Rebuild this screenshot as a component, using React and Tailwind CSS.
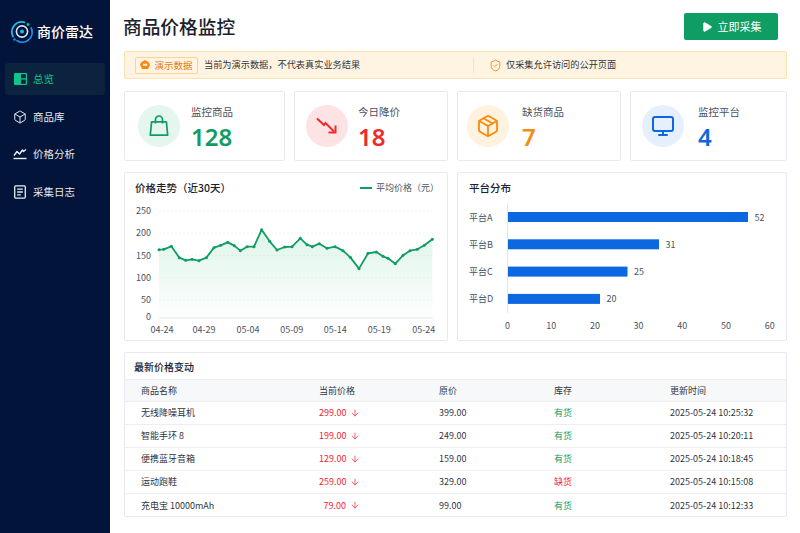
import { ArrowDown, Box, Monitor, Package, Play, ShieldCheck } from "lucide-react";

const font = "font-['Noto_Sans_CJK_SC','Noto_Sans',sans-serif]";

const linePoints = [
  [117, 239], [131, 238], [154, 229], [178, 263], [197, 271], [216, 268], [237, 272], [259, 263],
  [282, 233], [302, 226], [323, 217], [343, 227], [361, 242], [381, 230], [402, 230], [425, 179],
  [449, 214], [471, 240], [494, 231], [516, 230], [541, 205], [561, 224], [577, 230], [598, 221],
  [621, 235], [645, 230], [669, 242], [691, 262], [717, 296], [744, 250], [769, 246], [789, 259],
  [804, 265], [826, 281], [849, 256], [870, 242], [892, 238], [913, 226], [937, 208],
].map(([x, y]) => [x / 3 - 5, y / 3 - 3]);

const rows = [
  ["无线降噪耳机", "299.00", "399.00", "有货", "2025-05-24 10:25:32"],
  ["智能手环 8", "199.00", "249.00", "有货", "2025-05-24 10:20:11"],
  ["便携蓝牙音箱", "129.00", "159.00", "有货", "2025-05-24 10:18:45"],
  ["运动跑鞋", "259.00", "329.00", "缺货", "2025-05-24 10:15:08"],
  ["充电宝 10000mAh", "79.00", "99.00", "有货", "2025-05-24 10:12:33"],
];

function LogoIcon() {
  return (
    <svg width="24" height="24" viewBox="0 0 24 24" fill="none">
      <path d="M3 16.5A10 10 0 0 1 14.5 2.3" stroke="#22b8e8" strokeWidth="1.8" strokeLinecap="round" />
      <path d="M21.2 8A10 10 0 0 1 7 20.8" stroke="#1a8fe3" strokeWidth="1.8" strokeLinecap="round" />
      <circle cx="18" cy="4.5" r="1.4" fill="#16c784" />
      <circle cx="4.5" cy="19.5" r="1.3" fill="#1a8fe3" />
      <circle cx="12" cy="11.5" r="5.6" stroke="#d6e6f5" strokeWidth="1.6" />
      <circle cx="12" cy="11.5" r="2" fill="#22b8e8" />
    </svg>
  );
}

function OverviewIcon() {
  return (
    <svg width="13" height="12" viewBox="0 0 13 12">
      <rect width="13" height="12" rx="1" fill="#12c48b" />
      <rect x="7" y="1.2" width="4.8" height="4" fill="#0a2440" />
      <rect x="7" y="6.6" width="4.8" height="4.2" fill="#0a2440" />
    </svg>
  );
}

function AnalysisIcon() {
  return (
    <svg width="14" height="14" viewBox="0 0 14 14" fill="none" stroke="#e8edf3" strokeWidth="1.4">
      <path d="M1 8.5 4 4.5l2.5 2.5L9.5 3l1 1.5L13 2.5" strokeLinejoin="round" />
      <path d="M0.5 11.5h13" />
    </svg>
  );
}

function LogIcon() {
  return (
    <svg width="14" height="14" viewBox="0 0 14 14" fill="none" stroke="#e8edf3" strokeWidth="1.3">
      <rect x="1.7" y="0.9" width="10.6" height="12.2" rx="1" />
      <path d="M4.2 4.2h5.6M4.2 7h5.6M4.2 9.8h3.6" />
    </svg>
  );
}

function TagIcon() {
  return (
    <svg width="10" height="10" viewBox="0 0 10 10">
      <path d="M5 0 9 2.5 10 5 8 9 2 9 0 5 1 2.5z" fill="#f88a12" />
      <rect x="2.8" y="3.8" width="4.4" height="2" rx="0.6" fill="#fff4e2" />
    </svg>
  );
}

function NavItem({ icon, label, active }) {
  return (
    <div className={`mx-[5px] flex h-8 items-center gap-[6px] rounded-[3px] pl-2 text-[10.5px] ${active ? "bg-[#0c2340] text-[#12c48b]" : "text-[#e3e7ee]"}`}>
      <span className="flex w-[14px] justify-center">{icon}</span>
      {label}
    </div>
  );
}

function BagIcon() {
  return (
    <svg width="20" height="22" viewBox="0 0 20 22" fill="none" stroke="#0f9d63" strokeWidth="1.7" strokeLinejoin="round">
      <path d="M2.6 6.8h14.8l1.3 13.4H1.3z" />
      <path d="M6.5 8.5V4.5a3.5 3.5 0 0 1 7 0v4" />
    </svg>
  );
}

function DropIcon() {
  return (
    <svg width="24" height="20" viewBox="0 0 24 20" fill="none" stroke="#f02a2c" strokeWidth="2">
      <path d="M2 2.5 9 9l1.5-2L19 15.5" />
      <path d="M20.5 9.5v7h-7" />
    </svg>
  );
}

function StatCard({ width, inset, gap, icon, circle, label, value, color }) {
  return (
    <div className={`flex h-[70px] ${width} ${inset} items-center rounded-[2px] border border-[#e8eaf0] bg-white`}>
      <div className={`flex h-[42px] w-[42px] shrink-0 items-center justify-center rounded-full ${circle}`}>{icon}</div>
      <div className={`${gap} pt-[2px]`}>
        <div className="text-[10.5px] leading-[14px] text-[#4a5261]">{label}</div>
        <div className={`mt-[6px] text-[24px] leading-[24px] font-semibold ${color} font-['Noto_Sans',sans-serif]`}>{value}</div>
      </div>
    </div>
  );
}

function LineChart() {
  const line = linePoints.map((p) => p.join(",")).join(" ");
  const area = `34,145 ${line} 307.3,145`;
  const yLabels = [["250", 41], ["200", 63], ["150", 85.5], ["100", 107.5], ["50", 130], ["0", 147]];
  const xLabels = [["04-24", 37], ["04-29", 79], ["05-04", 123], ["05-09", 166.7], ["05-14", 210.3], ["05-19", 254.3], ["05-24", 298.7]];
  return (
    <svg width="322" height="167" viewBox="0 0 322 167" className="absolute top-0 left-0">
      <defs>
        <linearGradient id="trend" x1="0" y1="0" x2="0" y2="1">
          <stop offset="0" stopColor="#12b76a" stopOpacity="0.14" />
          <stop offset="1" stopColor="#12b76a" stopOpacity="0.01" />
        </linearGradient>
      </defs>
      {[38, 60, 82.5, 104.5, 127].map((y) => (
        <line key={y} x1="34" x2="308" y1={y} y2={y} stroke="#eceff2" strokeWidth="0.7" strokeDasharray="2 2" />
      ))}
      <line x1="34" x2="308" y1="145" y2="145" stroke="#e3e6ec" />
      <polygon points={area} fill="url(#trend)" />
      <polyline points={line} fill="none" stroke="#0f9d63" strokeWidth="1.8" strokeLinejoin="round" />
      {linePoints.map(([x, y]) => (
        <circle key={x} cx={x} cy={y} r="1.5" fill="#0f9d63" />
      ))}
      {yLabels.map(([t, y]) => (
        <text key={t} x="26" y={y} textAnchor="end" fontSize="9" fill="#4a5261">{t}</text>
      ))}
      {xLabels.map(([t, x]) => (
        <text key={t} x={x} y="160" textAnchor="middle" fontSize="9" fill="#4a5261">{t}</text>
      ))}
    </svg>
  );
}

function BarChart() {
  const bars = [["平台A", 52, 240], ["平台B", 31, 151], ["平台C", 25, 119.5], ["平台D", 20, 92]];
  return (
    <svg width="328" height="167" viewBox="0 0 328 167" className="absolute top-0 left-0">
      <line x1="49.5" x2="49.5" y1="30" y2="140" stroke="#e3e6ec" />
      {bars.map(([name, v, w], i) => (
        <g key={name}>
          <text x="11" y={47.5 + i * 27.3} fontSize="9" fill="#4a5261">{name}</text>
          <rect x="50" y={39 + i * 27.3} width={w} height="10" fill="#0b68e0" />
          <text x={w + 56.5} y={47.5 + i * 27.3} fontSize="9" fill="#4a5261">{v}</text>
        </g>
      ))}
      {[0, 10, 20, 30, 40, 50, 60].map((t, i) => (
        <text key={t} x={49.5 + i * 43.7} y="156" textAnchor="middle" fontSize="9" fill="#4a5261">{t}</text>
      ))}
    </svg>
  );
}

export default function App() {
  return (
    <div className={`flex h-[533px] w-[800px] overflow-hidden bg-white ${font}`}>
      <aside className="w-[110px] shrink-0 bg-[#03143a]">
        <div className="flex h-[63px] items-center gap-[3px] pl-[10px] text-[14px] font-medium text-white">
          <LogoIcon />
          商价雷达
        </div>
        <div className="flex flex-col gap-[5.5px]">
          <NavItem active icon={<OverviewIcon />} label="总览" />
          <NavItem icon={<Box size={14} color="#e8edf3" strokeWidth={1.7} />} label="商品库" />
          <NavItem icon={<AnalysisIcon />} label="价格分析" />
          <NavItem icon={<LogIcon />} label="采集日志" />
        </div>
      </aside>

      <main className="min-w-0 flex-1 pt-[13px] pr-[13px] pl-[14px]">
        <header className="flex h-[27px] items-center justify-between">
          <h1 className="-ml-px text-[18.7px] font-medium text-[#1a202c]">商品价格监控</h1>
          <button type="button" className="mr-[9px] flex h-[27px] w-[94px] items-center justify-center gap-[5px] rounded-[2px] bg-[#0f9d63] text-[11px] text-white">
            <Play size={12} fill="white" strokeWidth={1} />
            立即采集
          </button>
        </header>

        <div className="mt-[11px] flex h-[28px] items-center rounded-[2px] border border-[#fbe0b0] bg-[#fff4e2] pl-[10px] text-[9.2px] text-[#2f3640]">
          <span className="flex h-[17px] w-[63px] items-center justify-center gap-[4px] rounded-[2px] border border-[#fbd197] text-[9.5px] text-[#e67a19]">
            <TagIcon />
            演示数据
          </span>
          <span className="ml-[6px] w-[269px]">当前为演示数据，不代表真实业务结果</span>
          <span className="h-[15px] w-px bg-[#f3e3c8]" />
          <ShieldCheck className="mr-[4px] ml-[15px]" size={13} color="#f58a1f" strokeWidth={1.7} />
          <span>仅采集允许访问的公开页面</span>
        </div>

        <section className="mt-[12px] flex justify-between">
          <StatCard width="w-[161px]" inset="pl-[13px]" gap="ml-[11px]" circle="bg-[#e5f6ef]" icon={<BagIcon />} label="监控商品" value="128" color="text-[#0f9d63]" />
          <StatCard width="w-[154px]" inset="pl-[11px]" gap="ml-[10px]" circle="bg-[#fde3e3]" icon={<DropIcon />} label="今日降价" value="18" color="text-[#f02a2c]" />
          <StatCard width="w-[164px]" inset="pl-[9px]" gap="ml-[13px]" circle="bg-[#fff3e0]" icon={<Package size={24} color="#f98a0e" strokeWidth={1.8} />} label="缺货商品" value="7" color="text-[#f98a0e]" />
          <StatCard width="w-[157px]" inset="pl-[11px]" gap="ml-[14px]" circle="bg-[#e6f0fd]" icon={<Monitor size={24} color="#0b68e0" strokeWidth={2} />} label="监控平台" value="4" color="text-[#0b68e0]" />
        </section>

        <section className="mt-[11px] flex justify-between">
          <div className="relative h-[169px] w-[324px] rounded-[2px] border border-[#e8eaf0] bg-white">
            <LineChart />
            <div className="relative flex items-center justify-between pt-[7px] pr-[8px] pl-[10px]">
              <span className="text-[10.5px] font-medium text-[#1a202c]">价格走势（近30天）</span>
              <span className="flex items-center gap-[4px] text-[9px] text-[#4a5261]">
                <span className="h-[2px] w-[12px] bg-[#0f9d63]" />
                平均价格（元）
              </span>
            </div>
          </div>
          <div className="relative h-[169px] w-[330px] rounded-[2px] border border-[#e8eaf0] bg-white">
            <BarChart />
            <div className="relative pt-[7px] pl-[11px] text-[10.5px] font-medium text-[#1a202c]">平台分布</div>
          </div>
        </section>

        <section className="mt-[11px] h-[165px] rounded-[2px] border border-[#e8eaf0] bg-white">
          <div className="flex h-[26px] items-center pl-[9px] text-[10px] font-medium text-[#1a202c]">最新价格变动</div>
          <table className="w-full table-fixed border-collapse text-[9px] text-[#30363f]">
            <thead>
              <tr className="h-[22px] border-y border-[#eceef2] bg-[#f7f8fa] text-left font-normal">
                <th className="w-[178px] pl-4 font-normal">商品名称</th>
                <th className="w-[120px] pl-4 font-normal">当前价格</th>
                <th className="w-[115px] pl-4 font-normal">原价</th>
                <th className="w-[116px] pl-4 font-normal">库存</th>
                <th className="pl-4 font-normal">更新时间</th>
              </tr>
            </thead>
            <tbody>
              {rows.map((row) => (
                <tr key={row[0]} className="h-[23px] border-b border-[#eceef2] last:border-b-0">
                  <td className="pl-4">{row[0]}</td>
                  <td className="pl-4">
                    <span className="flex items-center text-[#f5222d]">
                      <span className="w-[27px] text-right">{row[1]}</span>
                      <ArrowDown className="ml-[4px]" size={10} strokeWidth={1.7} />
                    </span>
                  </td>
                  <td className="pl-4">{row[2]}</td>
                  <td className={`pl-4 ${row[3] === "缺货" ? "text-[#f5222d]" : "text-[#0f9d63]"}`}>{row[3]}</td>
                  <td className="pl-4">{row[4]}</td>
                </tr>
              ))}
            </tbody>
          </table>
        </section>
      </main>
    </div>
  );
}
